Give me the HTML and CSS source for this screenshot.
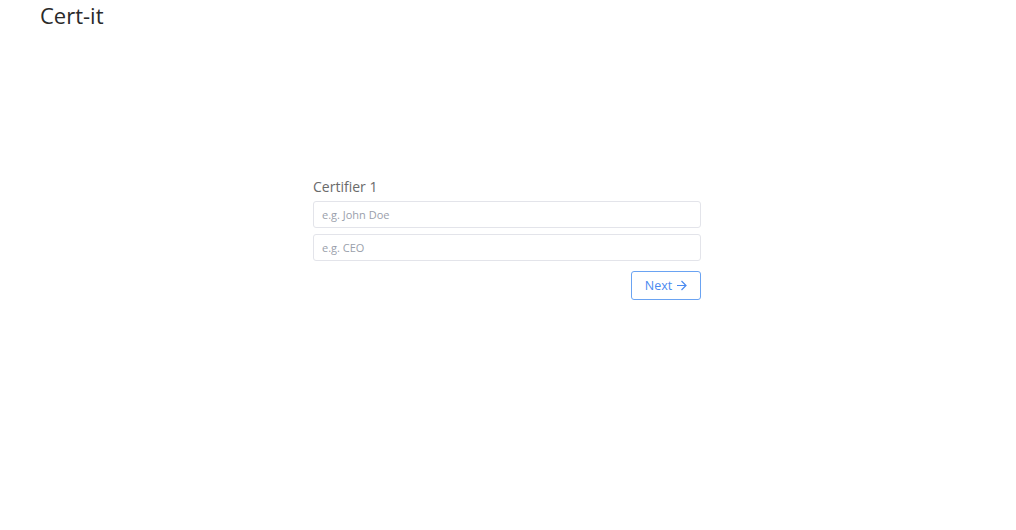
FILE: index.html
```html
<!DOCTYPE html>
<html>
<head>
<meta charset="utf-8">
<link rel="stylesheet" href="styles.css">
</head>
<body>
<header class="header">
  <h1 class="brand">Cert-it</h1>
</header>
<main class="main">
  <form class="form">
    <label class="label">Certifier 1</label>
    <input class="input" type="text" placeholder="e.g. John Doe">
    <input class="input" type="text" placeholder="e.g. CEO">
    <div class="actions">
      <button type="button" class="btn">Next <svg class="arrow" width="11" height="11" viewBox="0 0 11 11"><path d="M1 5.5H10M5.5 1L10 5.5L5.5 10" fill="none" stroke="currentColor" stroke-width="1.2"/></svg></button>
    </div>
  </form>
</main>
</body>
</html>
```
FILE: styles.css
```css
* { box-sizing: border-box; }
html, body { margin: 0; padding: 0; background: #fff; }
body {
  font-family: "Open Sans", "Noto Sans", sans-serif;
  color: #333;
}
.header { padding: 1px 0 0 40px; }
.brand {
  margin: 0;
  font-size: 22px;
  font-weight: 400;
  color: #2a2a2a;
  line-height: 28px;
}
.main {
  display: flex;
  justify-content: center;
  padding: 149px 2px 0 0;
}
.form {
  width: 388px;
  display: flex;
  flex-direction: column;
}
.label {
  font-size: 14px;
  color: #6a6a6a;
  line-height: 18px;
  margin-bottom: 5px;
  margin-top: 0;
}
.input {
  height: 27px;
  border: 1px solid #e3e4ea;
  border-radius: 3px;
  padding: 0 8px;
  font-family: inherit;
  font-size: 11px;
  color: #333;
  margin-bottom: 6px;
  outline: none;
}
.input::placeholder { color: #9aa0ab; }
.actions {
  display: flex;
  justify-content: flex-end;
  margin-top: 4px;
}
.btn {
  width: 70px;
  height: 29px;
  border: 1px solid #6aa3f2;
  border-radius: 3px;
  background: #fff;
  color: #4a8af0;
  font-family: inherit;
  font-size: 12.5px;
  padding: 0;
  cursor: pointer;
  display: inline-flex;
  align-items: center;
  justify-content: center;
  gap: 4px;
}
.arrow { display: block; }
```
